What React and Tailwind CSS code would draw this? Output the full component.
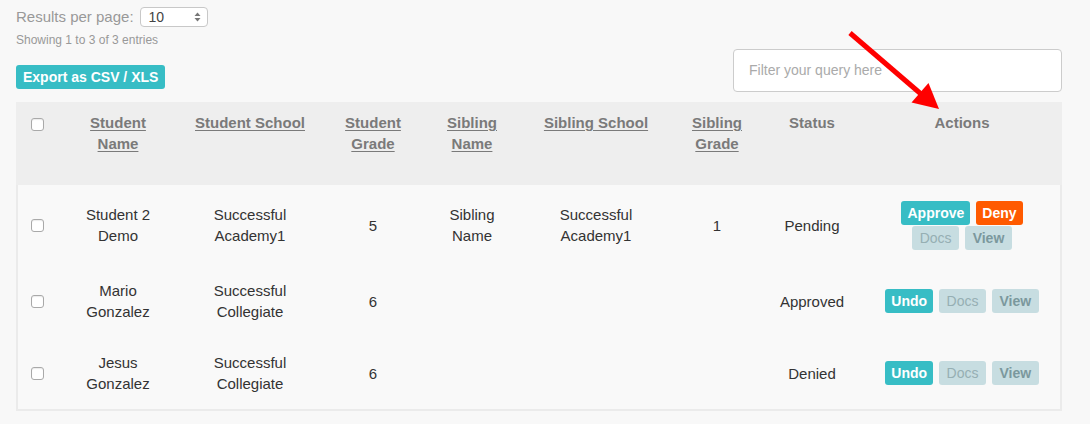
export default function App() {
  const cols = "grid grid-cols-[38px_124px_140px_106px_92px_156px_86px_104px_196px]";
  const headers = [
    { lines: ["Student", "Name"], u: true },
    { lines: ["Student School"], u: true },
    { lines: ["Student", "Grade"], u: true },
    { lines: ["Sibling", "Name"], u: true },
    { lines: ["Sibling School"], u: true },
    { lines: ["Sibling", "Grade"], u: true },
    { lines: ["Status"], u: false },
    { lines: ["Actions"], u: false },
  ];
  const rows = [
    {
      h: "h-[80px]",
      name: ["Student 2", "Demo"],
      school: ["Successful", "Academy1"],
      grade: "5",
      sib: ["Sibling", "Name"],
      sibSchool: ["Successful", "Academy1"],
      sibGrade: "1",
      status: "Pending",
      pending: true,
    },
    {
      h: "h-[72px]",
      name: ["Mario", "Gonzalez"],
      school: ["Successful", "Collegiate"],
      grade: "6",
      sib: [],
      sibSchool: [],
      sibGrade: "",
      status: "Approved",
    },
    {
      h: "h-[72px]",
      name: ["Jesus", "Gonzalez"],
      school: ["Successful", "Collegiate"],
      grade: "6",
      sib: [],
      sibSchool: [],
      sibGrade: "",
      status: "Denied",
    },
  ];

  const Check = () => (
    <div className="w-[13px] h-[13px] rounded-[3px] border border-[#a9a9a9] bg-white shadow-[inset_0_1px_1px_rgba(0,0,0,0.08)]" />
  );
  const Lines = ({ lines }) => (
    <div className="flex flex-col items-center">
      {lines.map((l, i) => (
        <span key={i} className="whitespace-nowrap">{l}</span>
      ))}
    </div>
  );
  const Docs = () => (
    <span className="h-[24px] px-[7.5px] rounded-[3px] bg-[#c7dde1] text-[#96afb3] text-[14px] leading-[24px]">Docs</span>
  );
  const View = () => (
    <span className="h-[24px] px-[7.5px] rounded-[3px] bg-[#c7dde1] text-[#7b989d] text-[14px] font-bold leading-[24px]">View</span>
  );

  return (
    <div className="relative w-[1090px] h-[424px] overflow-hidden bg-[#f8f8f8] [font-family:'Liberation_Sans',Arial,sans-serif]">
      <div className="pl-4 pt-[7px] w-[1062px]">
        <div className="flex justify-between">
          <div className="flex flex-col">
            <div className="flex items-center h-[20px]">
              <span className="text-[15px] leading-[20px] text-[#999]">Results per page:</span>
              <div className="ml-[6px] w-[68px] h-[20px] rounded-[4px] border border-[#c8c8c8] bg-white flex items-center justify-between pl-[8px] pr-[6px]">
                <span className="text-[14px] leading-[18px] text-[#444]">10</span>
                <svg width="7" height="10" viewBox="0 0 7 10">
                  <path d="M3.5 0.5 L6.5 4 L0.5 4 Z" fill="#777" />
                  <path d="M3.5 9.5 L6.5 6 L0.5 6 Z" fill="#777" />
                </svg>
              </div>
            </div>
            <div className="mt-[5px] text-[12px] leading-[16px] text-[#999]">Showing 1 to 3 of 3 entries</div>
            <div className="mt-[17px] self-start h-[24px] px-[7px] rounded-[3px] bg-[#37bdc5] text-white text-[14px] font-bold leading-[24px]">
              Export as CSV / XLS
            </div>
          </div>
          <div className="mt-[42px] w-[329px] h-[43px] border border-[#ccc] rounded-[4px] bg-white flex items-center pl-[15px] text-[14px] text-[#aaa]">
            Filter your query here
          </div>
        </div>

        <div className="mt-[10px] w-[1046px]">
          <div className={`${cols} h-[83px] bg-[#eeeeee] px-[2px] items-start text-[15px] leading-[21px] font-bold text-[#7a7a7a]`}>
            <div className="flex justify-center pt-[16px]">
              <Check />
            </div>
            {headers.map((h, i) => (
              <div key={i} className="pt-[10px] flex flex-col items-center text-center">
                {h.lines.map((l, j) => (
                  <span key={j} className={h.u ? "underline underline-offset-2 whitespace-nowrap" : "whitespace-nowrap"}>
                    {l}
                  </span>
                ))}
              </div>
            ))}
          </div>
          <div className="bg-[#f9f9f9] border-x-2 border-b-2 border-[#ebebeb] text-[15px] leading-[21px] text-[#333]">
            {rows.map((r, i) => (
              <div key={i} className={`${cols} ${r.h} items-center`}>
                <div className="flex justify-center">
                  <Check />
                </div>
                <Lines lines={r.name} />
                <Lines lines={r.school} />
                <div className="text-center">{r.grade}</div>
                <Lines lines={r.sib} />
                <Lines lines={r.sibSchool} />
                <div className="text-center">{r.sibGrade}</div>
                <div className="text-center">{r.status}</div>
                <div className="flex flex-col items-center gap-[1px]">
                  {r.pending ? (
                    <>
                      <div className="flex gap-[6px]">
                        <span className="h-[24px] px-[6px] rounded-[3px] bg-[#37bdc5] text-white text-[14px] font-bold leading-[24px]">Approve</span>
                        <span className="h-[24px] px-[6px] rounded-[3px] bg-[#ff5a00] text-white text-[14px] font-bold leading-[24px]">Deny</span>
                      </div>
                      <div className="flex gap-[6px]">
                        <Docs />
                        <View />
                      </div>
                    </>
                  ) : (
                    <div className="flex gap-[6px]">
                      <span className="h-[24px] px-[6px] rounded-[3px] bg-[#37bdc5] text-white text-[14px] font-bold leading-[24px]">Undo</span>
                      <Docs />
                      <View />
                    </div>
                  )}
                </div>
              </div>
            ))}
          </div>
        </div>
      </div>

      <svg className="absolute left-0 top-0 pointer-events-none" width="1090" height="424" viewBox="0 0 1090 424">
        <line x1="850" y1="33" x2="921" y2="94" stroke="#ff0000" strokeWidth="5" />
        <polygon points="939,109 911.5,102.6 928.5,82.9" fill="#ff0000" />
      </svg>
    </div>
  );
}
